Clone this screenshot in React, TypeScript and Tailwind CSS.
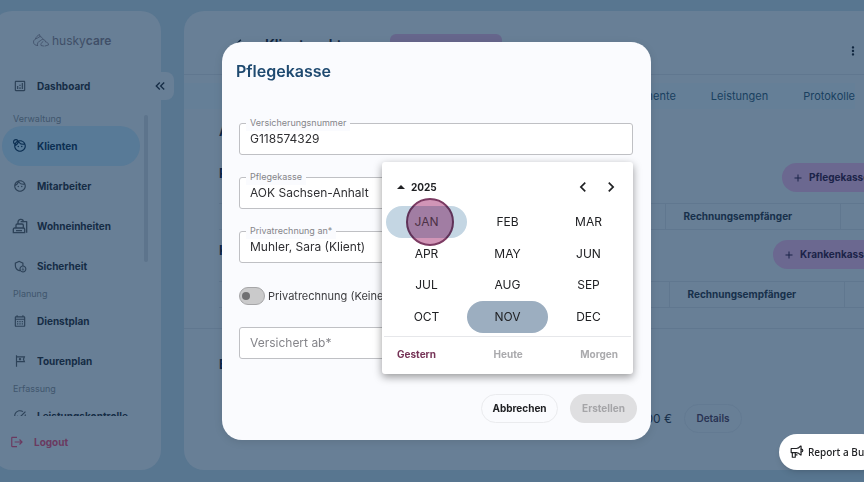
import { useState } from 'react';
import {
    MdAdd,
    MdArrowBackIosNew,
    MdChevronLeft,
    MdChevronRight,
    MdKeyboardDoubleArrowLeft,
    MdLogout,
    MdMoreVert,
    MdOutlineAdminPanelSettings,
    MdOutlineAnalytics,
    MdOutlineCalendarMonth,
    MdOutlineFace,
    MdOutlineFace4,
    MdOutlineTour,
    MdTaskAlt,
} from 'react-icons/md';

const MONTHS = ['JAN', 'FEB', 'MAR', 'APR', 'MAY', 'JUN', 'JUL', 'AUG', 'SEP', 'OCT', 'NOV', 'DEC'];

function HuskyLogo() {
    return (
        <svg viewBox="0 0 32 26" className="h-[13px] w-4" fill="none" stroke="currentColor" strokeWidth="1.6" strokeLinecap="round" strokeLinejoin="round">
            <path d="M9 23C4 23 1 20 1 16c0-3 2-5 4-6 1-4 4-7 8-9l1 4c3 1 6 3 6 6" />
            <path d="M5 10c3-1 6-3 9-5M9 23c-1-4 1-8 5-9l4-3" />
            <path d="M20 11c3 0 5 2 5 5 3 0 6 2 6 6l-7 2M20 15c-3 2-5 5-4 8l5 1" />
        </svg>
    );
}

function HousingIcon() {
    return (
        <svg viewBox="0 0 24 24" className="size-4" fill="none" stroke="currentColor" strokeWidth="2" strokeLinejoin="round">
            <path d="M9 9V6c0-2 1.500-3.500 3.500-4h1C16 2 17 4 17 5.500h5V22" />
            <path d="M6 15v-4c0-1 .8-2 2-2h7c1 0 2 1 2 2v4" />
            <path d="M2 22v-5c0-1.200.8-2 2-2h13c1.200 0 2 .8 2 2v5H2z" />
            <path d="M6 19h9M13 5.500h4" />
        </svg>
    );
}

function MegaphoneIcon() {
    return (
        <svg viewBox="0 0 24 24" className="size-[14px]" fill="none" stroke="currentColor" strokeWidth="2" strokeLinejoin="round" strokeLinecap="round">
            <path d="M2 6h9c3 0 5-1.500 7-4h1v15h-1c-2-2.500-4-4-7-4H2z" />
            <path d="M4 13v8h5v-8M9 17h3M19 7c2 0 3 1 3 2.500S21 12 19 12" />
        </svg>
    );
}

function NavItem({ icon, label, active = false }: { icon: React.ReactNode; label: string; active?: boolean }) {
    return (
        <a
            href="#"
            className={`flex h-10 shrink-0 items-center gap-[9px] rounded-full pl-[10px] text-[10px] font-bold ${
                active ? 'bg-[#587a97] text-[#0c2f52]' : 'text-[#152c45]'
            }`}
        >
            <span className={`flex w-4 justify-center text-[14px] ${active ? '' : 'text-[#2d4258]'}`}>{icon}</span>
            {label}
        </a>
    );
}

function NavLabel({ children }: { children: React.ReactNode }) {
    return <p className="h-[15px] shrink-0 pl-[11px] text-[9px] leading-[15px] text-[#40566d]">{children}</p>;
}

function Sidebar() {
    return (
        <aside className="relative -ml-2 flex w-[169px] shrink-0 flex-col rounded-[20px] bg-[#687f96] pl-[10px]">
            <div className="flex h-[55px] items-center gap-[3px] pt-1 pl-[31px] text-[#404f68]">
                <HuskyLogo />
                <span className="text-[12px]">
                    husky<b className="font-semibold">care</b>
                </span>
            </div>
            <NavItem icon={<MdOutlineAnalytics />} label="Dashboard" />
            <button
                aria-label="Menü einklappen"
                className="absolute top-[61px] -right-[13px] flex h-7 w-7 items-center justify-center rounded-r-lg bg-[#687f96] text-[16px] text-[#152c45]"
            >
                <MdKeyboardDoubleArrowLeft />
            </button>

            <div className="mt-[5px] flex min-h-0 flex-1 overflow-hidden">
                <nav className="flex w-[138px] flex-col">
                    <NavLabel>Verwaltung</NavLabel>
                    <NavItem icon={<MdOutlineFace4 />} label="Klienten" active />
                    <NavItem icon={<MdOutlineFace />} label="Mitarbeiter" />
                    <NavItem icon={<HousingIcon />} label="Wohneinheiten" />
                    <NavItem icon={<MdOutlineAdminPanelSettings />} label="Sicherheit" />
                    <NavLabel>Planung</NavLabel>
                    <NavItem icon={<MdOutlineCalendarMonth />} label="Dienstplan" />
                    <NavItem icon={<MdOutlineTour />} label="Tourenplan" />
                    <NavLabel>Erfassung</NavLabel>
                    <NavItem icon={<MdTaskAlt />} label="Leistungskontrolle" />
                </nav>
                <div className="mt-1 ml-1 h-[147px] w-1 rounded-full bg-[#5d748c]" />
            </div>

            <a href="#" className="flex h-[54px] items-center gap-[10px] pb-0.5 pl-2 text-[10px] font-bold text-[#6b3a60]">
                <MdLogout className="text-[14px]" />
                Logout
            </a>
        </aside>
    );
}

function SectionHeader({ title, action, wide = false }: { title: string; action: string; wide?: boolean }) {
    return (
        <div className="flex h-[29px] items-start pl-[35px]">
            <h3 className="text-[13px] leading-5 font-bold text-[#0c2747]">{title}</h3>
            <button
                className={`ml-auto flex h-[29px] items-center gap-[5px] rounded-full bg-[#6b6890] pl-[10px] text-[10px] font-bold whitespace-nowrap text-[#1b2348] ${
                    wide ? '-mr-[21px] w-28' : '-mr-[19px] w-[101px]'
                }`}
            >
                <MdAdd className="text-[12px]" />
                {action}
            </button>
        </div>
    );
}

function PayerTable({ wide = false }: { wide?: boolean }) {
    return (
        <table className="ml-[35px] w-[645px] table-fixed border-collapse text-left text-[10px] text-[#17304b]">
            <thead>
                <tr className="h-[26px] border-y border-[#60778f]">
                    <th className={wide ? 'w-[450px]' : 'w-[446px]'} />
                    <th className="w-[175px] border-x border-[#60778f] pl-[18px] font-bold">Rechnungsempfänger</th>
                    <th />
                </tr>
            </thead>
        </table>
    );
}

function ClientPage() {
    return (
        <main className="ml-[23px] flex min-w-0 flex-1 flex-col overflow-hidden rounded-l-[20px] bg-[#687f96]">
            <header className="flex h-16 items-center border-b border-[#60778f] pt-1 pl-[47px] text-[#10263f]">
                <MdArrowBackIosNew className="text-[14px]" />
                <h1 className="ml-5 text-[14px] leading-4 font-semibold">Klientenakte</h1>
                <span className="mt-[6px] ml-10 h-7 w-28 rounded-md bg-[#66668c]" />
                <button aria-label="Mehr" className="mt-3 ml-auto pr-1 text-[14px]">
                    <MdMoreVert />
                </button>
            </header>

            <nav className="mt-2 mr-[9px] flex h-[26px] items-center justify-end gap-[35px] bg-[#657f97] text-[11px] text-[#19405f]">
                <a href="#">Dokumente</a>
                <a href="#">Leistungen</a>
                <a href="#">Protokolle</a>
            </nav>

            <h2 className="mt-3 h-5 pl-[35px] text-[13px] leading-5 font-bold text-[#0c2747]">Abrechnung</h2>
            <div className="mt-[22px]">
                <SectionHeader title="Pflegekassen" action="Pflegekasse" />
            </div>
            <div className="mt-[11px]">
                <PayerTable />
            </div>
            <div className="mt-[10px]">
                <SectionHeader title="Krankenkassen" action="Krankenkasse" wide />
            </div>
            <div className="mt-3 border-b border-[#60778f] pb-5">
                <PayerTable wide />
            </div>
            <h2 className="mt-[25px] h-5 pl-[35px] text-[13px] leading-5 font-bold text-[#0c2747]">Budgets</h2>
            <div className="mt-[30px] flex h-[29px] items-center justify-end gap-3 pr-[122px]">
                <span className="text-[12px] text-[#17304b]">0,00 €</span>
                <button className="h-[29px] w-[58px] rounded-full border border-[#637a92] text-[10px] font-semibold text-[#283353]">
                    Details
                </button>
            </div>
        </main>
    );
}

function Field({ id, label, defaultValue }: { id: string; label: string; defaultValue: string }) {
    return (
        <div className="relative">
            <label htmlFor={id} className="absolute -top-2 left-[7px] bg-[#fafbfe] px-1 text-[9px] leading-4 text-[#85858a]">
                {label}
            </label>
            <input
                id={id}
                defaultValue={defaultValue}
                className="block h-8 w-full rounded-[3px] border border-[#bfc0c4] bg-white px-[10px] pb-0.5 text-[12px] text-[#303033] outline-none"
            />
        </div>
    );
}

function MonthPicker() {
    const [selected, setSelected] = useState('NOV');

    return (
        <div className="absolute top-[39px] right-0 w-[251px] rounded-[3px] bg-white text-[#202124] shadow-[0_3px_8px_rgba(0,0,0,0.4)]">
            <div className="flex h-11 items-center pt-[6px] pr-3 pl-[15px]">
                <button className="flex items-center gap-[6px] text-[10px] font-bold">
                    <svg viewBox="0 0 8 4" className="h-1 w-2" fill="currentColor">
                        <path d="M4 0l4 4H0z" />
                    </svg>
                    2025
                </button>
                <button aria-label="Vorheriges Jahr" className="ml-auto text-[20px]">
                    <MdChevronLeft />
                </button>
                <button aria-label="Nächstes Jahr" className="ml-2 text-[20px]">
                    <MdChevronRight />
                </button>
            </div>

            <div className="grid h-[127px] grid-cols-3 px-1">
                {MONTHS.map((month) => (
                    <button
                        key={month}
                        onClick={() => setSelected(month)}
                        className={`relative flex items-center justify-center rounded-full text-[12px] ${
                            month === selected ? 'bg-[#9caec0]' : month === 'JAN' ? 'bg-[#c4d6e3] text-[#5d5462]' : ''
                        }`}
                    >
                        {month}
                        {month === 'JAN' && (
                            <span className="absolute -top-2 left-5 size-12 rounded-full border-2 border-[#7c3b63] bg-[#d195b7] mix-blend-multiply" />
                        )}
                    </button>
                ))}
            </div>

            <div className="mx-0.5 mt-[3px] flex h-[38px] items-center justify-between border-t border-[#e6e7ea] px-[13px] pb-0.5 text-[10px] font-bold text-[#aaaaad]">
                <button className="text-[#763457]">Gestern</button>
                <button>Heute</button>
                <button>Morgen</button>
            </div>
        </div>
    );
}

function InsuranceDialog() {
    return (
        <div role="dialog" aria-labelledby="dialog-title" className="w-[429px] rounded-[20px] bg-[#fafbfe] px-[14px] py-[17px] shadow-[0_2px_8px_rgba(0,0,0,0.1)]">
            <h2 id="dialog-title" className="text-[16px] leading-6 font-semibold text-[#1f4a70]">
                Pflegekasse
            </h2>

            <form className="relative mt-10 mr-1 ml-[3px] flex flex-col gap-[22px]">
                <Field id="number" label="Versicherungsnummer" defaultValue="G118574329" />
                <Field id="fund" label="Pflegekasse" defaultValue="AOK Sachsen-Anhalt" />
                <Field id="private" label="Privatrechnung an*" defaultValue="Muhler, Sara (Klient)" />
                <label className="mt-0.5 flex h-[18px] items-center gap-[3px] text-[11px] text-[#3b3b3e]">
                    <input type="checkbox" role="switch" className="peer sr-only" />
                    <span className="flex h-[18px] w-[26px] items-center rounded-full border border-[#a6a6a8] bg-[#cacacb] px-[2px] peer-checked:justify-end">
                        <span className="size-2 rounded-full bg-[#707072]" />
                    </span>
                    Privatrechnung (Keine Kasse)
                </label>
                <input
                    aria-label="Versichert ab"
                    placeholder="Versichert ab*"
                    className="block h-8 w-full rounded-[3px] border border-[#bfc0c4] bg-white px-[10px] pb-0.5 text-[12px] outline-none placeholder:text-[#85858a]"
                />
                <MonthPicker />
            </form>

            <div className="mt-[35px] flex justify-end gap-3 text-[10px] font-bold">
                <button className="h-[29px] w-[77px] rounded-full border border-[#eaebee] text-[#202124]">Abbrechen</button>
                <button disabled className="h-[29px] w-[67px] rounded-full bg-[#dfdfe1] text-[#a5a5a8]">
                    Erstellen
                </button>
            </div>
        </div>
    );
}

export default function App() {
    return (
        <div className="relative flex h-screen overflow-hidden bg-[#587690] pt-[11px] pb-3 font-['Inter','Liberation_Sans',sans-serif]">
            <Sidebar />
            <ClientPage />

            <div className="fixed inset-0 flex items-center justify-center pl-[9px]">
                <InsuranceDialog />
            </div>

            <button className="fixed -right-4 bottom-3 flex h-9 w-[101px] items-center gap-1 rounded-full bg-white pl-[11px] font-['Noto_Sans',sans-serif] text-[10px] font-medium whitespace-nowrap text-[#202124] shadow-md">
                <MegaphoneIcon />
                Report a Bug
            </button>
        </div>
    );
}
